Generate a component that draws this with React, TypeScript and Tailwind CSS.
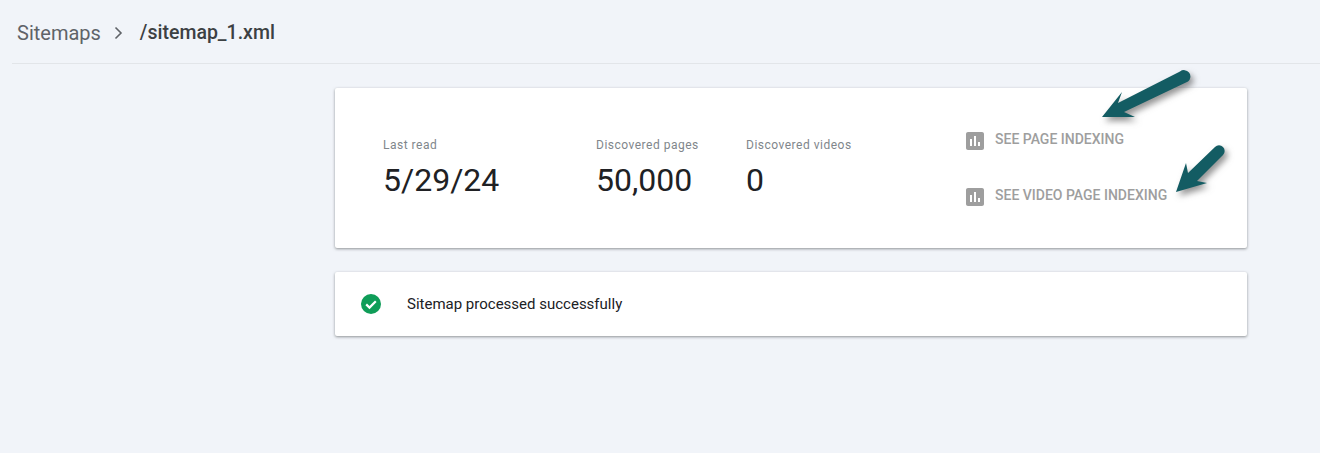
import React from 'react';

const ChartIcon: React.FC = () => (
    <svg width="18" height="18" viewBox="3 3 18 18" className="mt-[2px] shrink-0">
        <path
            d="M19 3H5c-1.1 0-2 .9-2 2v14c0 1.1.9 2 2 2h14c1.1 0 2-.9 2-2V5c0-1.1-.9-2-2-2zM9 17H7v-7h2v7zm4 0h-2V7h2v10zm4 0h-2v-4h2v4z"
            fill="#9e9e9e"
        />
    </svg>
);

const Stat: React.FC<{ label: string; value: string; className: string }> = ({ label, value, className }) => (
    <div className={className}>
        <div className="mt-[1px] text-[12px] leading-[16px] tracking-[0.5px] text-[#80868b]">{label}</div>
        <div className="mt-[7px] text-[32px] leading-[40px] text-[#202124]">{value}</div>
    </div>
);

const Arrows: React.FC = () => (
    <svg
        width="1320"
        height="453"
        viewBox="0 0 1320 453"
        className="absolute left-0 top-0 pointer-events-none drop-shadow-[3px_4px_3px_rgba(60,60,60,0.55)]"
    >
        <path d="M1102 117 L1122 92 L1118 103 L1180 71.5 A5.5 5.5 0 0 1 1188 81.5 L1124 112 L1135 117 Z" fill="#135c63" />
        <path d="M1176 192 L1186 163 L1188 173 L1215 147 A5.5 5.5 0 0 1 1223 155 L1197 181 L1207 183 Z" fill="#135c63" />
    </svg>
);

const App: React.FC = () => {
    return (
        <div className="relative h-[453px] w-[1320px] overflow-hidden bg-[#f1f4f9] font-['Roboto',sans-serif]">
            {/* Breadcrumb */}
            <div className="ml-[12px] flex h-[64px] items-center border-b border-[#e2e5e9] pl-[5px] pt-[2px] text-[19.5px]">
                <span className="text-[20px] text-[#5f6368]">Sitemaps</span>
                <svg width="12" height="14" viewBox="0 0 12 14" className="ml-[12px] mr-[15px]" fill="none">
                    <path d="M2.5 1.5 L8 7 L2.5 12.5" stroke="#5f6368" strokeWidth="1.6" />
                </svg>
                <span className="font-medium text-[#3c4043]">/sitemap_1.xml</span>
            </div>

            <div className="ml-[335px] mt-[24px] w-[912px]">
                {/* Stats card */}
                <div className="flex h-[160px] rounded-[2px] bg-white pl-[48px] pt-[48px] shadow-[0_1px_3px_rgba(60,64,67,0.55)]">
                    <Stat label="Last read" value="5/29/24" className="w-[213px]" />
                    <Stat label="Discovered pages" value="50,000" className="w-[150px]" />
                    <Stat label="Discovered videos" value="0" className="w-[220px]" />
                    <div className="-mt-[6px] flex flex-col gap-[36px]">
                        <div className="flex items-center gap-[11px]">
                            <ChartIcon />
                            <span className="-mt-[2px] text-[14px] font-medium leading-[18px] text-[#9e9e9e]">SEE PAGE INDEXING</span>
                        </div>
                        <div className="flex items-center gap-[11px]">
                            <ChartIcon />
                            <span className="-mt-[2px] text-[14px] font-medium leading-[18px] text-[#9e9e9e]">SEE VIDEO PAGE INDEXING</span>
                        </div>
                    </div>
                </div>

                {/* Status card */}
                <div className="mt-[24px] flex h-[64px] items-center rounded-[2px] bg-white pl-[26px] shadow-[0_1px_3px_rgba(60,64,67,0.55)]">
                    <svg width="20" height="20" viewBox="0 0 20 20" className="shrink-0">
                        <circle cx="10" cy="10" r="10" fill="#0f9d58" />
                        <path d="M5.2 10.4 L8.5 13.6 L14.8 7.2" stroke="#fff" strokeWidth="2.2" fill="none" />
                    </svg>
                    <span className="ml-[26px] text-[15px] text-[#202124]">Sitemap processed successfully</span>
                </div>
            </div>

            <Arrows />
        </div>
    );
};

export default App;
